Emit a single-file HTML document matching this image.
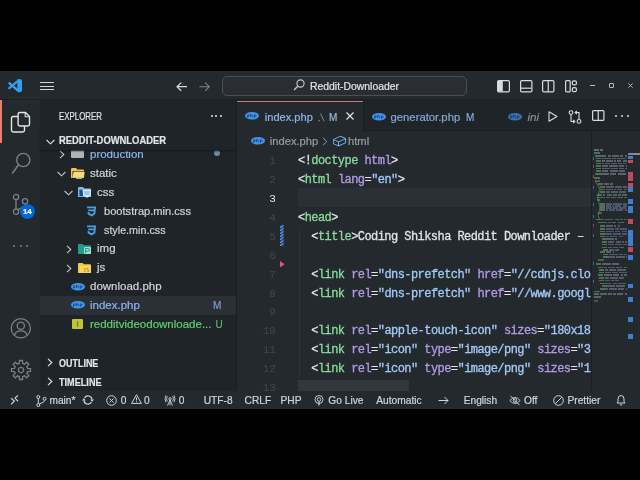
<!DOCTYPE html>
<html><head><meta charset="utf-8">
<style>
*{margin:0;padding:0;box-sizing:border-box}
html,body{-webkit-font-smoothing:antialiased;width:640px;height:480px;background:#000;overflow:hidden;font-family:"Liberation Sans",sans-serif;position:relative}
.a{position:absolute}
.t{position:absolute;white-space:nowrap;line-height:1;-webkit-text-stroke:0.2px currentColor}
svg{position:absolute;overflow:visible}
#title{left:0;top:71px;width:640px;height:28px;background:#24292e}
#tb{left:0;top:99px;width:640px;height:1px;background:#1b1f23}
#act{left:0;top:100px;width:40px;height:291px;background:#24292e}
#side{left:40px;top:100px;width:196px;height:291px;background:#1f2428}
#sideb{left:236px;top:100px;width:1px;height:291px;background:#1b1f23}
#ed{left:237px;top:100px;width:403px;height:291px;background:#24292e}
#tabs{left:237px;top:100px;width:403px;height:30px;background:#1f2428}
#tabsb{left:237px;top:130px;width:403px;height:1px;background:#1b1f23}
#status{left:0;top:391px;width:640px;height:17.5px;background:#24292e}
.code{position:absolute;left:298px;white-space:pre;font-family:"Liberation Mono",monospace;font-size:12px;letter-spacing:-0.56px;color:#e1e4e8;line-height:18.92px;height:18.92px;-webkit-text-stroke:0.3px currentColor}
.ln{position:absolute;left:234.5px;width:41px;text-align:right;font-family:"Liberation Mono",monospace;font-size:11px;letter-spacing:-0.25px;color:#444d56;line-height:18.92px}
.g{color:#8ad99c}.p{color:#b29ae6}.s{color:#a3c9f6}
.ui{font-size:11px;color:#d1d5da}
</style></head><body><div id="root" style="position:absolute;left:0;top:0;width:640px;height:480px;will-change:transform">
<div class="a" id="title"></div>
<div class="a" id="tb"></div>
<div class="a" id="act"></div>
<div class="a" id="side"></div>
<div class="a" id="sideb"></div>
<div class="a" id="ed"></div>
<div class="a" id="tabs"></div>
<div class="a" id="tabsb"></div>
<div class="a" id="status"></div>


<!-- TITLEBAR -->
<svg style="left:4px;top:74px" width="24" height="24" viewBox="4 74 24 24"><path d="M9.3 83.2L18.6 91M9.3 88.2L18.6 80.4" stroke="#33a0ee" stroke-width="2.3" stroke-linecap="round"/><path d="M17.4 79.6L20.6 78.9L22 80.4V90.8L20.6 92.3L17.4 91.5Z" fill="#33a0ee"/></svg>
<div class="a" style="left:40px;top:82.2px;width:14px;height:1.3px;background:#d0d4d8"></div>
<div class="a" style="left:40px;top:85.7px;width:14px;height:1.3px;background:#d0d4d8"></div>
<div class="a" style="left:40px;top:89.2px;width:14px;height:1.3px;background:#d0d4d8"></div>
<svg style="left:176px;top:81.5px" width="12" height="10" viewBox="0 0 12 10"><path d="M11 4.7H1M5.2 0.6L1 4.7L5.2 8.8" stroke="#d8dbde" stroke-width="1.2" fill="none"/></svg>
<svg style="left:199px;top:81.5px" width="12" height="10" viewBox="0 0 12 10"><path d="M0.3 4.7H10.3M6.1 0.6L10.3 4.7L6.1 8.8" stroke="#7b8288" stroke-width="1.1" fill="none"/></svg>
<div class="a" style="left:222px;top:75.5px;width:245px;height:20px;border:1px solid #4a4f55;border-radius:5px;background:#2a2e34"></div>
<svg style="left:293px;top:79px" width="12" height="12" viewBox="0 0 12 12"><circle cx="7.5" cy="4.5" r="3.6" stroke="#c8ccd0" stroke-width="1.1" fill="none"/><path d="M5 7L1 11" stroke="#c8ccd0" stroke-width="1.2"/></svg>
<div class="t" style="left:309.7px;top:81px;font-size:11px;color:#e1e4e8;transform:scaleX(0.945);transform-origin:0 0">Reddit-Downloader</div>
<!-- layout icons -->
<svg style="left:497px;top:79.5px" width="13" height="12.5" viewBox="0 0 13 12.5"><rect x="0.6" y="0.6" width="11.8" height="11.3" rx="1.2" stroke="#d8dbde" stroke-width="1.2" fill="none"/><rect x="1" y="1" width="4.8" height="10.5" fill="#d8dbde"/></svg>
<svg style="left:519.5px;top:79.5px" width="12.5" height="12.5" viewBox="0 0 12.5 12.5"><rect x="0.6" y="0.6" width="11.3" height="11.3" rx="1.2" stroke="#d8dbde" stroke-width="1.2" fill="none"/><path d="M1 8.2H11.5" stroke="#d8dbde" stroke-width="1.2"/></svg>
<svg style="left:542.3px;top:79.5px" width="12.5" height="12.5" viewBox="0 0 12.5 12.5"><rect x="0.6" y="0.6" width="11.3" height="11.3" rx="1.2" stroke="#d8dbde" stroke-width="1.2" fill="none"/><path d="M6.25 1V11.5" stroke="#d8dbde" stroke-width="1.2"/></svg>
<svg style="left:565.3px;top:79.5px" width="12" height="12.5" viewBox="0 0 12 12.5"><rect x="0.6" y="0.6" width="4.6" height="11.3" rx="1" stroke="#d8dbde" stroke-width="1.2" fill="none"/><rect x="7.3" y="0.8" width="4.1" height="4.1" rx="1.5" stroke="#d8dbde" stroke-width="1.2" fill="none"/><rect x="7.3" y="7.6" width="4.1" height="4.1" rx="1.5" stroke="#d8dbde" stroke-width="1.2" fill="none"/></svg>
<div class="a" style="left:590px;top:84.8px;width:5.2px;height:1px;background:#b8bdc2"></div>
<div class="a" style="left:609px;top:83.4px;width:5.2px;height:4.8px;border:1.1px solid #b8bdc2;border-radius:1px"></div>
<svg style="left:628.2px;top:83.4px" width="5" height="5" viewBox="0 0 5 5"><path d="M0.3 0.3L4.7 4.7M4.7 0.3L0.3 4.7" stroke="#b8bdc2" stroke-width="0.9"/></svg>
<!-- ACTIVITY BAR -->
<div class="a" style="left:0;top:100px;width:2px;height:43px;background:#e8806c"></div>
<svg style="left:10px;top:111px" width="21" height="22" viewBox="0 0 21 22">
 <path d="M8 5.5H3.2Q1.5 5.5 1.5 7.2V19.3Q1.5 21 3.2 21H12.8Q14.5 21 14.5 19.3V15" stroke="#e1e4e8" stroke-width="1.4" fill="none"/>
 <path d="M9.8 1.5H15.5L19.5 5.5V13.3Q19.5 15 17.8 15H9.8Q8.1 15 8.1 13.3V3.2Q8.1 1.5 9.8 1.5Z" stroke="#e1e4e8" stroke-width="1.4" fill="none"/>
 <path d="M15.2 1.8V5.8H19.2" stroke="#e1e4e8" stroke-width="1.1" fill="none"/>
</svg>
<svg style="left:11.2px;top:152px" width="20" height="23" viewBox="0 0 20 23"><circle cx="12.3" cy="8" r="6.6" stroke="#7a8087" stroke-width="1.4" fill="none"/><path d="M7.6 12.8L1.2 21.5" stroke="#7a8087" stroke-width="1.5"/></svg>
<svg style="left:11px;top:192px" width="20" height="24" viewBox="0 0 20 24"><circle cx="5" cy="5" r="2.6" stroke="#7a8087" stroke-width="1.3" fill="none"/><circle cx="14" cy="9.3" r="2.6" stroke="#7a8087" stroke-width="1.3" fill="none"/><circle cx="5" cy="19.7" r="2.6" stroke="#7a8087" stroke-width="1.3" fill="none"/><path d="M5 7.6V17.1M14 11.9Q14 15.5 6.5 17.3" stroke="#7a8087" stroke-width="1.3" fill="none"/></svg>
<div class="a" style="left:19.7px;top:204.2px;width:15px;height:15px;border-radius:50%;background:#0366d6"></div>
<div class="t" style="left:19.7px;top:208px;width:15px;text-align:center;font-size:8px;font-weight:bold;color:#fff;letter-spacing:-0.3px">14</div>
<div class="a" style="left:13px;top:244.8px;width:2.2px;height:2.2px;border-radius:50%;background:#7a8087"></div>
<div class="a" style="left:19.5px;top:244.8px;width:2.2px;height:2.2px;border-radius:50%;background:#7a8087"></div>
<div class="a" style="left:26px;top:244.8px;width:2.2px;height:2.2px;border-radius:50%;background:#7a8087"></div>
<svg style="left:10px;top:318px" width="22" height="22" viewBox="0 0 22 22"><circle cx="10.8" cy="10.3" r="9.6" stroke="#7a8087" stroke-width="1.3" fill="none"/><circle cx="10.8" cy="7.8" r="3.6" stroke="#7a8087" stroke-width="1.3" fill="none"/><path d="M4.5 17.3Q5.5 12.8 10.8 12.8Q16.1 12.8 17.1 17.3" stroke="#7a8087" stroke-width="1.3" fill="none"/></svg>
<svg style="left:10px;top:359px" width="22" height="22" viewBox="-11 -11 22 22"><path d="M-1.69 -6.59 L-1.50 -9.48 L1.50 -9.48 L1.69 -6.59 L3.46 -5.85 L5.64 -7.77 L7.77 -5.64 L5.85 -3.46 L6.59 -1.69 L9.48 -1.50 L9.48 1.50 L6.59 1.69 L5.85 3.46 L7.77 5.64 L5.64 7.77 L3.46 5.85 L1.69 6.59 L1.50 9.48 L-1.50 9.48 L-1.69 6.59 L-3.46 5.85 L-5.64 7.77 L-7.77 5.64 L-5.85 3.46 L-6.59 1.69 L-9.48 1.50 L-9.48 -1.50 L-6.59 -1.69 L-5.85 -3.46 L-7.77 -5.64 L-5.64 -7.77 L-3.46 -5.85Z" stroke="#7a8087" stroke-width="1.3" fill="none"/><circle cx="0" cy="0" r="2.6" stroke="#7a8087" stroke-width="1.3" fill="none"/></svg>




<!-- SIDEBAR -->
<div class="t" style="left:59.4px;top:112.00px;font-size:10.2px;color:#e1e4e8;transform:scaleX(0.775);transform-origin:0 0">EXPLORER</div>
<div class="a" style="left:210.7px;top:114.9px;width:2px;height:2px;border-radius:50%;background:#e1e4e8"></div>
<div class="a" style="left:215.1px;top:114.9px;width:2px;height:2px;border-radius:50%;background:#e1e4e8"></div>
<div class="a" style="left:219.5px;top:114.9px;width:2px;height:2px;border-radius:50%;background:#e1e4e8"></div>
<div class="a" style="left:40px;top:296px;width:196px;height:18.9px;background:#2b3036"></div>
<svg style="left:58.5px;top:150px" width="6" height="9" viewBox="0 0 6 9"><path d="M1 0.8L4.8 4.5L1 8.2" stroke="#c0c4c8" stroke-width="1.1" fill="none"/></svg>
<div class="a" style="left:71px;top:150px;width:13px;height:8px;background:#aab5be;border-radius:1px"></div>
<div class="t" style="left:90px;top:149.00px;font-size:11.5px;color:#8fb4ec;">production</div>
<div class="a" style="left:214.25px;top:150.2px;width:6px;height:6px;border-radius:50%;background:#6a8ab2"></div>
<svg style="left:57px;top:170.5px" width="9" height="6" viewBox="0 0 9 6"><path d="M0.6 1L4.5 4.8L8.4 1" stroke="#c0c4c8" stroke-width="1.1" fill="none"/></svg>
<svg style="left:71px;top:168px" width="14" height="11" viewBox="0 0 14 11"><path d="M0 1.2Q0 0 1.2 0H5L6.3 1.4H12Q13 1.4 13 2.4V10H0Z" fill="#e6c35e"/><path d="M1.5 3.2H13.5V9.6H1.5Z" fill="#2b2a1e"/><path d="M2.6 3.8H13.6L13 9.8H1.4Z" fill="#f6da80"/><rect x="5" y="9.6" width="6" height="1.2" fill="#d8d2b0"/></svg>
<div class="t" style="left:90px;top:168.00px;font-size:11.5px;color:#d1d5da;">static</div>
<svg style="left:64px;top:189.5px" width="9" height="6" viewBox="0 0 9 6"><path d="M0.6 1L4.5 4.8L8.4 1" stroke="#c0c4c8" stroke-width="1.1" fill="none"/></svg>
<svg style="left:78px;top:187px" width="14" height="11" viewBox="0 0 14 11"><path d="M0 1.2Q0 0 1.2 0H5L6.3 1.4H12Q13 1.4 13 2.4V10H0Z" fill="#7db8ea"/><rect x="1.4" y="2.6" width="4" height="6.5" fill="#1f4c82"/><path d="M4.6 2.6H13.2L12.7 8.8L8.9 10.8L5.1 8.8Z" fill="#cfe6fb"/><path d="M6 5H11.8M6.3 7H11.5" stroke="#5a9ede" stroke-width="0.9"/></svg>
<div class="t" style="left:97px;top:187.00px;font-size:11.5px;color:#d1d5da;">css</div>
<svg style="left:86px;top:205.5px" width="11" height="11" viewBox="0 0 11 11"><path d="M1 0.5H10L9.3 8.2L5.5 10.5L1.7 8.2L1.5 6H3.3L3.4 7.1L5.5 8.3L7.5 7.2L7.7 5.3H2.3L2.1 3.6H7.9L8 2.2H1.1Z" fill="#46a0ec"/></svg>
<div class="t" style="left:104px;top:206.00px;font-size:11.5px;color:#d1d5da;transform:scaleX(0.965);transform-origin:0 0">bootstrap.min.css</div>
<svg style="left:86px;top:224.5px" width="11" height="11" viewBox="0 0 11 11"><path d="M1 0.5H10L9.3 8.2L5.5 10.5L1.7 8.2L1.5 6H3.3L3.4 7.1L5.5 8.3L7.5 7.2L7.7 5.3H2.3L2.1 3.6H7.9L8 2.2H1.1Z" fill="#46a0ec"/></svg>
<div class="t" style="left:104px;top:225.00px;font-size:11.5px;color:#d1d5da;transform:scaleX(0.935);transform-origin:0 0">style.min.css</div>
<svg style="left:65.5px;top:244.5px" width="6" height="9" viewBox="0 0 6 9"><path d="M1 0.8L4.8 4.5L1 8.2" stroke="#c0c4c8" stroke-width="1.1" fill="none"/></svg>
<svg style="left:78px;top:244px" width="13" height="10" viewBox="0 0 13 10"><path d="M0 1Q0 0 1 0H4.5L5.8 1.3H12Q13 1.3 13 2.3V10H0Z" fill="#1f9e8c"/><rect x="6" y="3" width="7" height="7" rx="1" fill="#9fe0d4"/><path d="M7.5 9V4.5H10Q11.5 4.5 11.5 6Q11.5 7.2 10 7.2H7.5" stroke="#1f9e8c" stroke-width="1" fill="none"/></svg>
<div class="t" style="left:97px;top:243.00px;font-size:11.5px;color:#d1d5da;">img</div>
<svg style="left:65.5px;top:263.5px" width="6" height="9" viewBox="0 0 6 9"><path d="M1 0.8L4.8 4.5L1 8.2" stroke="#c0c4c8" stroke-width="1.1" fill="none"/></svg>
<svg style="left:78px;top:263px" width="13" height="10" viewBox="0 0 13 10"><path d="M0 1Q0 0 1 0H4.5L5.8 1.3H12Q13 1.3 13 2.3V10H0Z" fill="#f5c84a"/><path d="M2 2.8H13V10H2Z" fill="#fbd65e"/><path d="M7 5V8Q7 9 6 9M10.5 5.2Q9 4.8 9 5.8Q9 6.6 10 6.8Q11 7 11 8Q11 9 9 8.7" stroke="#a3781c" stroke-width="0.8" fill="none"/></svg>
<div class="t" style="left:97px;top:262.00px;font-size:11.5px;color:#d1d5da;">js</div>
<svg style="left:70.5px;top:282.6px" width="14" height="7.6" viewBox="0 0 14 7.6" preserveAspectRatio="none"><ellipse cx="7" cy="3.8" rx="7" ry="3.8" fill="#4595e6"/><path d="M2.6 6V2.9Q4.4 2.5 4.4 3.7Q4.4 4.7 2.7 4.5M5.6 1.8V5.1M5.6 3.4Q7.6 2.4 7.6 3.4V5.1M9.4 6V2.9Q11.2 2.5 11.2 3.7Q11.2 4.7 9.5 4.5" stroke="#12488c" stroke-width="0.85" fill="none"/></svg>
<div class="t" style="left:90px;top:281.00px;font-size:11.5px;color:#d1d5da;">download.php</div>
<svg style="left:70.5px;top:301.4px" width="14" height="7.6" viewBox="0 0 14 7.6" preserveAspectRatio="none"><ellipse cx="7" cy="3.8" rx="7" ry="3.8" fill="#4595e6"/><path d="M2.6 6V2.9Q4.4 2.5 4.4 3.7Q4.4 4.7 2.7 4.5M5.6 1.8V5.1M5.6 3.4Q7.6 2.4 7.6 3.4V5.1M9.4 6V2.9Q11.2 2.5 11.2 3.7Q11.2 4.7 9.5 4.5" stroke="#12488c" stroke-width="0.85" fill="none"/></svg>
<div class="t" style="left:90px;top:300.00px;font-size:11.5px;color:#8fb4ec;">index.php</div>
<div class="t" style="left:213px;top:301.00px;font-size:10px;color:#7d9dcc;">M</div>
<svg style="left:72px;top:319px" width="11" height="10" viewBox="0 0 11 10"><rect x="0" y="0" width="11" height="10" rx="1" fill="#c3c33a"/><path d="M5 2L6 3.5L5 5L6 6.5L5 8" stroke="#5a5a20" stroke-width="0.9" fill="none"/></svg>
<div class="t" style="left:90px;top:319.00px;font-size:11.5px;color:#5fcf6e;">redditvideodownloade...</div>
<div class="t" style="left:215.5px;top:320.00px;font-size:10px;color:#52b85f;">U</div>
<div class="a" style="left:40px;top:131px;width:196px;height:18.5px;background:#1f2428;box-shadow:0 1px 1.5px #15181b"></div>
<svg style="left:45.5px;top:138.5px" width="9" height="6" viewBox="0 0 9 6"><path d="M0.6 1L4.5 4.8L8.4 1" stroke="#e1e4e8" stroke-width="1.1" fill="none"/></svg>
<div class="t" style="left:59.4px;top:136.00px;font-size:10px;color:#e1e4e8;font-weight:bold;transform:scaleX(0.94);transform-origin:0 0">REDDIT-DOWNLOADER</div>
<svg style="left:46.5px;top:358.3px" width="6" height="9" viewBox="0 0 6 9"><path d="M1 0.8L4.8 4.5L1 8.2" stroke="#e1e4e8" stroke-width="1.1" fill="none"/></svg>
<div class="t" style="left:59.4px;top:359.00px;font-size:10.2px;color:#e1e4e8;font-weight:bold;transform:scaleX(0.88);transform-origin:0 0">OUTLINE</div>
<svg style="left:46.5px;top:377.1px" width="6" height="9" viewBox="0 0 6 9"><path d="M1 0.8L4.8 4.5L1 8.2" stroke="#e1e4e8" stroke-width="1.1" fill="none"/></svg>
<div class="t" style="left:59.4px;top:378.00px;font-size:10.2px;color:#e1e4e8;font-weight:bold;transform:scaleX(0.895);transform-origin:0 0">TIMELINE</div>

<!-- TABS -->
<div class="a" style="left:237px;top:100px;width:125.5px;height:31px;background:#24292e"></div>
<div class="a" style="left:237px;top:101px;width:125.5px;height:1px;background:#c27a6e"></div>
<div class="a" style="left:362.5px;top:100px;width:1px;height:30px;background:#1b1f23"></div>
<svg style="left:245.3px;top:112.1px" width="14" height="7.6" viewBox="0 0 14 7.6" preserveAspectRatio="none"><ellipse cx="7" cy="3.8" rx="7" ry="3.8" fill="#4595e6"/><path d="M2.6 6V2.9Q4.4 2.5 4.4 3.7Q4.4 4.7 2.7 4.5M5.6 1.8V5.1M5.6 3.4Q7.6 2.4 7.6 3.4V5.1M9.4 6V2.9Q11.2 2.5 11.2 3.7Q11.2 4.7 9.5 4.5" stroke="#12488c" stroke-width="0.85" fill="none"/></svg>
<div class="t" style="left:264.75px;top:112.00px;font-size:11.1px;color:#8fb4ec;">index.php</div>
<svg style="left:318px;top:113px" width="7" height="9" viewBox="0 0 7 9"><path d="M2.6 0.6L6 8.2" stroke="#8a9199" stroke-width="0.9"/><rect x="0.6" y="7" width="1.2" height="1.2" fill="#8a9199"/></svg>
<div class="t" style="left:329px;top:113.00px;font-size:10px;color:#9fb6dc;">M</div>
<svg style="left:346px;top:111.8px" width="8" height="8" viewBox="0 0 8 8"><path d="M0.5 0.5L7.5 7.5M7.5 0.5L0.5 7.5" stroke="#e1e4e8" stroke-width="1.2"/></svg>
<svg style="left:371.5px;top:112.5px" width="14" height="7.6" viewBox="0 0 14 7.6" preserveAspectRatio="none"><ellipse cx="7" cy="3.8" rx="7" ry="3.8" fill="#4595e6"/><path d="M2.6 6V2.9Q4.4 2.5 4.4 3.7Q4.4 4.7 2.7 4.5M5.6 1.8V5.1M5.6 3.4Q7.6 2.4 7.6 3.4V5.1M9.4 6V2.9Q11.2 2.5 11.2 3.7Q11.2 4.7 9.5 4.5" stroke="#12488c" stroke-width="0.85" fill="none"/></svg>
<div class="t" style="left:390.5px;top:112.00px;font-size:11.3px;color:#86a6d6;">generator.php</div>
<div class="t" style="left:466px;top:113.00px;font-size:10px;color:#86a6d6;">M</div>
<svg opacity="0.7" style="left:508px;top:112.5px" width="14" height="7.6" viewBox="0 0 14 7.6" preserveAspectRatio="none"><ellipse cx="7" cy="3.8" rx="7" ry="3.8" fill="#4595e6"/><path d="M2.6 6V2.9Q4.4 2.5 4.4 3.7Q4.4 4.7 2.7 4.5M5.6 1.8V5.1M5.6 3.4Q7.6 2.4 7.6 3.4V5.1M9.4 6V2.9Q11.2 2.5 11.2 3.7Q11.2 4.7 9.5 4.5" stroke="#12488c" stroke-width="0.85" fill="none"/></svg>
<div class="t" style="left:527.5px;top:112.00px;font-size:11.5px;color:#8a9299;font-style:italic">ini</div>
<svg style="left:547.7px;top:110.5px" width="10" height="11" viewBox="0 0 10 11"><path d="M1 0.8L9 5.5L1 10.2Z" stroke="#d8dbde" stroke-width="1.1" fill="none" stroke-linejoin="round"/></svg>
<svg style="left:568px;top:110px" width="14" height="14" viewBox="0 0 14 14"><circle cx="3" cy="2.6" r="1.9" stroke="#d8dbde" stroke-width="1.1" fill="none"/><circle cx="11" cy="11.4" r="1.9" stroke="#d8dbde" stroke-width="1.1" fill="none"/><path d="M3 4.5V11.5H6.5M5.2 10L6.8 11.5L5.2 13M11 9.5V2.5H7.5M8.8 1L7.2 2.5L8.8 4" stroke="#d8dbde" stroke-width="1.1" fill="none"/></svg>
<svg style="left:592px;top:110px" width="12.5" height="11" viewBox="0 0 12.5 11"><rect x="0.6" y="0.6" width="11.3" height="9.8" rx="1" stroke="#d8dbde" stroke-width="1.2" fill="none"/><path d="M6.25 1V10.4" stroke="#d8dbde" stroke-width="1.2"/></svg>
<div class="a" style="left:614.7px;top:114.7px;width:2px;height:2px;border-radius:50%;background:#d8dbde"></div>
<div class="a" style="left:620.6px;top:114.7px;width:2px;height:2px;border-radius:50%;background:#d8dbde"></div>
<div class="a" style="left:626.5px;top:114.7px;width:2px;height:2px;border-radius:50%;background:#d8dbde"></div>
<svg style="left:250.5px;top:137px" width="14" height="7.6" viewBox="0 0 14 7.6" preserveAspectRatio="none"><ellipse cx="7" cy="3.8" rx="7" ry="3.8" fill="#4595e6"/><path d="M2.6 6V2.9Q4.4 2.5 4.4 3.7Q4.4 4.7 2.7 4.5M5.6 1.8V5.1M5.6 3.4Q7.6 2.4 7.6 3.4V5.1M9.4 6V2.9Q11.2 2.5 11.2 3.7Q11.2 4.7 9.5 4.5" stroke="#12488c" stroke-width="0.85" fill="none"/></svg>
<div class="t" style="left:269.75px;top:136.00px;font-size:11.2px;color:#959da5;">index.php</div>
<svg style="left:322px;top:137px" width="6" height="9" viewBox="0 0 6 9"><path d="M1 0.8L4.8 4.5L1 8.2" stroke="#959da5" stroke-width="1" fill="none"/></svg>
<svg style="left:333px;top:136px" width="12.6" height="10" viewBox="1 2 13.45 12" preserveAspectRatio="none"><path d="M14.45 4.5l-5-2.5h-.9l-7 3.5-.55.89v4.5l.55.9 5 2.5h.9l7-3.5.55-.9v-4.5l-.55-.89zm-8 8.64l-4.5-2.25V7.17l4.5 2v3.97zm.5-4.8L2.29 6.23l6.66-3.34 4.67 2.34-6.67 3.11zm7 1.55l-6.5 3.25V9.21l6.5-3v3.68z" fill="#75b6f5"/></svg>
<div class="t" style="left:348px;top:136.00px;font-size:11.2px;color:#959da5;">html</div>

<!-- CODE -->
<div class="a" style="left:298px;top:187.8px;width:294px;height:18.8px;background:#2b3036"></div>
<div class="a" style="left:299px;top:226.2px;width:1px;height:151.4px;background:#2c3238"></div>
<div class="code" style="top:152.10px">&lt;!<span class="g">doctype</span> <span class="p">html</span>&gt;</div>
<div class="code" style="top:171.02px">&lt;<span class="g">html</span> <span class="p">lang</span>=<span class="s">"en"</span>&gt;</div>
<div class="code" style="top:208.86px">&lt;<span class="g">head</span>&gt;</div>
<div class="code" style="top:227.78px">  &lt;<span class="g">title</span>&gt;Coding Shiksha Reddit Downloader –</div>
<div class="code" style="top:265.62px">  &lt;<span class="g">link</span> <span class="p">rel</span>=<span class="s">"dns-prefetch"</span> <span class="p">href</span>=<span class="s">"//cdnjs.clo</span></div>
<div class="code" style="top:284.54px">  &lt;<span class="g">link</span> <span class="p">rel</span>=<span class="s">"dns-prefetch"</span> <span class="p">href</span>=<span class="s">"//www.googl</span></div>
<div class="code" style="top:322.38px">  &lt;<span class="g">link</span> <span class="p">rel</span>=<span class="s">"apple-touch-icon"</span> <span class="p">sizes</span>=<span class="s">"180x18</span></div>
<div class="code" style="top:341.30px">  &lt;<span class="g">link</span> <span class="p">rel</span>=<span class="s">"icon"</span> <span class="p">type</span>=<span class="s">"image/png"</span> <span class="p">sizes</span>=<span class="s">"3</span></div>
<div class="code" style="top:360.22px">  &lt;<span class="g">link</span> <span class="p">rel</span>=<span class="s">"icon"</span> <span class="p">type</span>=<span class="s">"image/png"</span> <span class="p">sizes</span>=<span class="s">"1</span></div>
<div class="ln" style="top:152.10px;color:#41484f">1</div>
<div class="ln" style="top:171.02px;color:#41484f">2</div>
<div class="ln" style="top:189.94px;color:#e1e4e8">3</div>
<div class="ln" style="top:208.86px;color:#41484f">4</div>
<div class="ln" style="top:227.78px;color:#41484f">5</div>
<div class="ln" style="top:246.70px;color:#41484f">6</div>
<div class="ln" style="top:265.62px;color:#41484f">7</div>
<div class="ln" style="top:284.54px;color:#41484f">8</div>
<div class="ln" style="top:303.46px;color:#41484f">9</div>
<div class="ln" style="top:322.38px;color:#41484f">10</div>
<div class="ln" style="top:341.30px;color:#41484f">11</div>
<div class="ln" style="top:360.22px;color:#41484f">12</div>
<div class="ln" style="top:379.14px;color:#41484f">13</div>
<svg style="left:279.8px;top:224.5px" width="3.7" height="21" viewBox="0 0 3.7 21"><defs><pattern id="st" width="3.7" height="3" patternUnits="userSpaceOnUse"><rect width="3.7" height="3" fill="#24406a"/><path d="M0 3L3.7 0" stroke="#6a9ee0" stroke-width="1.1"/></pattern></defs><rect width="3.7" height="21" fill="url(#st)"/></svg>
<svg style="left:279.5px;top:260.5px" width="4.5" height="6.5" viewBox="0 0 4.5 6.5"><path d="M0 0L4.5 3.25L0 6.5Z" fill="#e2557a"/></svg>
<div class="a" style="left:298px;top:379.5px;width:111px;height:11.5px;background:#363b41;opacity:0.85"></div>

<!-- MINIMAP -->
<div class="a" style="left:592px;top:131px;width:48px;height:260px;background:#24292e"></div>
<div class="a" style="left:591px;top:131px;width:1px;height:260px;background:#1b1f23"></div>
<div class="a" style="left:594.0px;top:149.4px;width:5.2px;height:1.8px;background:#a9a6c0;opacity:0.5"></div>
<div class="a" style="left:600.2px;top:149.4px;width:3.2px;height:1.8px;background:#a9a6c0;opacity:0.5"></div>
<div class="a" style="left:594.0px;top:152.4px;width:6.0px;height:1.8px;background:#7fae88;opacity:0.5"></div>
<div class="a" style="left:595.0px;top:154.9px;width:4.5px;height:1.8px;background:#79b584;opacity:0.5"></div>
<div class="a" style="left:600.3px;top:154.9px;width:6.1px;height:1.8px;background:#8b9aa8;opacity:0.5"></div>
<div class="a" style="left:607.9px;top:154.9px;width:2.9px;height:1.8px;background:#8b9aa8;opacity:0.5"></div>
<div class="a" style="left:611.9px;top:154.9px;width:7.2px;height:1.8px;background:#8b9aa8;opacity:0.5"></div>
<div class="a" style="left:620.1px;top:154.9px;width:3.4px;height:1.8px;background:#8b9aa8;opacity:0.5"></div>
<div class="a" style="left:624.8px;top:154.9px;width:2.2px;height:1.8px;background:#8b9aa8;opacity:0.5"></div>
<div class="a" style="left:596.0px;top:157.6px;width:4.5px;height:1.8px;background:#79b584;opacity:0.5"></div>
<div class="a" style="left:602.0px;top:157.6px;width:8.5px;height:1.8px;background:#7d9a8e;opacity:0.5"></div>
<div class="a" style="left:611.7px;top:157.6px;width:3.9px;height:1.8px;background:#7d9a8e;opacity:0.5"></div>
<div class="a" style="left:617.1px;top:157.6px;width:8.9px;height:1.8px;background:#7d9a8e;opacity:0.5"></div>
<div class="a" style="left:596.0px;top:160.1px;width:4.5px;height:1.8px;background:#79b584;opacity:0.5"></div>
<div class="a" style="left:601.8px;top:160.1px;width:2.9px;height:1.8px;background:#8b9aa8;opacity:0.5"></div>
<div class="a" style="left:606.2px;top:160.1px;width:6.5px;height:1.8px;background:#8b9aa8;opacity:0.5"></div>
<div class="a" style="left:613.6px;top:160.1px;width:2.1px;height:1.8px;background:#8b9aa8;opacity:0.5"></div>
<div class="a" style="left:617.3px;top:160.1px;width:4.2px;height:1.8px;background:#8b9aa8;opacity:0.5"></div>
<div class="a" style="left:622.8px;top:160.1px;width:4.2px;height:1.8px;background:#8b9aa8;opacity:0.5"></div>
<div class="a" style="left:596.0px;top:162.6px;width:4.5px;height:1.8px;background:#79b584;opacity:0.5"></div>
<div class="a" style="left:601.5px;top:162.6px;width:2.5px;height:1.8px;background:#7d9a8e;opacity:0.5"></div>
<div class="a" style="left:605.0px;top:162.6px;width:4.6px;height:1.8px;background:#7d9a8e;opacity:0.5"></div>
<div class="a" style="left:610.8px;top:162.6px;width:6.1px;height:1.8px;background:#7d9a8e;opacity:0.5"></div>
<div class="a" style="left:617.9px;top:162.6px;width:4.2px;height:1.8px;background:#7d9a8e;opacity:0.5"></div>
<div class="a" style="left:623.2px;top:162.6px;width:2.9px;height:1.8px;background:#7d9a8e;opacity:0.5"></div>
<div class="a" style="left:596.0px;top:165.1px;width:4.5px;height:1.8px;background:#79b584;opacity:0.5"></div>
<div class="a" style="left:601.5px;top:165.1px;width:6.4px;height:1.8px;background:#8b9aa8;opacity:0.5"></div>
<div class="a" style="left:608.8px;top:165.1px;width:8.8px;height:1.8px;background:#8b9aa8;opacity:0.5"></div>
<div class="a" style="left:618.5px;top:165.1px;width:5.6px;height:1.8px;background:#8b9aa8;opacity:0.5"></div>
<div class="a" style="left:625.5px;top:165.1px;width:1.5px;height:1.8px;background:#8b9aa8;opacity:0.5"></div>
<div class="a" style="left:596.0px;top:167.6px;width:4.5px;height:1.8px;background:#79b584;opacity:0.5"></div>
<div class="a" style="left:601.9px;top:167.6px;width:8.4px;height:1.8px;background:#7d9a8e;opacity:0.5"></div>
<div class="a" style="left:611.4px;top:167.6px;width:6.2px;height:1.8px;background:#7d9a8e;opacity:0.5"></div>
<div class="a" style="left:618.9px;top:167.6px;width:4.7px;height:1.8px;background:#7d9a8e;opacity:0.5"></div>
<div class="a" style="left:624.8px;top:167.6px;width:2.2px;height:1.8px;background:#7d9a8e;opacity:0.5"></div>
<div class="a" style="left:596.0px;top:170.1px;width:4.5px;height:1.8px;background:#79b584;opacity:0.5"></div>
<div class="a" style="left:602.0px;top:170.1px;width:6.2px;height:1.8px;background:#8b9aa8;opacity:0.5"></div>
<div class="a" style="left:609.6px;top:170.1px;width:8.0px;height:1.8px;background:#8b9aa8;opacity:0.5"></div>
<div class="a" style="left:619.0px;top:170.1px;width:5.8px;height:1.8px;background:#8b9aa8;opacity:0.5"></div>
<div class="a" style="left:595.0px;top:173.4px;width:4.5px;height:1.8px;background:#79b584;opacity:0.5"></div>
<div class="a" style="left:600.4px;top:173.4px;width:8.9px;height:1.8px;background:#9a9aa8;opacity:0.5"></div>
<div class="a" style="left:610.2px;top:173.4px;width:6.2px;height:1.8px;background:#9a9aa8;opacity:0.5"></div>
<div class="a" style="left:617.8px;top:173.4px;width:8.3px;height:1.8px;background:#9a9aa8;opacity:0.5"></div>
<div class="a" style="left:594.0px;top:177.1px;width:5.6px;height:1.8px;background:#7fae88;opacity:0.5"></div>
<div class="a" style="left:595.0px;top:180.4px;width:5.0px;height:1.8px;background:#6f9c72;opacity:0.5"></div>
<div class="a" style="left:598.0px;top:183.1px;width:4.5px;height:1.8px;background:#79b584;opacity:0.5"></div>
<div class="a" style="left:604.0px;top:183.1px;width:4.9px;height:1.8px;background:#8b9aa8;opacity:0.5"></div>
<div class="a" style="left:610.2px;top:183.1px;width:2.6px;height:1.8px;background:#8b9aa8;opacity:0.5"></div>
<div class="a" style="left:600.0px;top:186.1px;width:4.5px;height:1.8px;background:#79b584;opacity:0.5"></div>
<div class="a" style="left:605.5px;top:186.1px;width:8.2px;height:1.8px;background:#7f8fa0;opacity:0.5"></div>
<div class="a" style="left:614.8px;top:186.1px;width:7.7px;height:1.8px;background:#7f8fa0;opacity:0.5"></div>
<div class="a" style="left:623.4px;top:186.1px;width:3.6px;height:1.8px;background:#7f8fa0;opacity:0.5"></div>
<div class="a" style="left:600.0px;top:188.6px;width:4.5px;height:1.8px;background:#79b584;opacity:0.5"></div>
<div class="a" style="left:605.7px;top:188.6px;width:7.1px;height:1.8px;background:#7f8fa0;opacity:0.5"></div>
<div class="a" style="left:613.6px;top:188.6px;width:2.0px;height:1.8px;background:#7f8fa0;opacity:0.5"></div>
<div class="a" style="left:616.7px;top:188.6px;width:5.8px;height:1.8px;background:#7f8fa0;opacity:0.5"></div>
<div class="a" style="left:623.5px;top:188.6px;width:3.5px;height:1.8px;background:#7f8fa0;opacity:0.5"></div>
<div class="a" style="left:600.0px;top:191.1px;width:4.5px;height:1.8px;background:#79b584;opacity:0.5"></div>
<div class="a" style="left:606.0px;top:191.1px;width:3.7px;height:1.8px;background:#7f8fa0;opacity:0.5"></div>
<div class="a" style="left:610.7px;top:191.1px;width:7.1px;height:1.8px;background:#7f8fa0;opacity:0.5"></div>
<div class="a" style="left:619.1px;top:191.1px;width:6.9px;height:1.8px;background:#7f8fa0;opacity:0.5"></div>
<div class="a" style="left:597.0px;top:194.1px;width:4.5px;height:1.8px;background:#79b584;opacity:0.5"></div>
<div class="a" style="left:603.0px;top:194.1px;width:2.4px;height:1.8px;background:#7d9a8e;opacity:0.5"></div>
<div class="a" style="left:606.8px;top:194.1px;width:5.1px;height:1.8px;background:#7d9a8e;opacity:0.5"></div>
<div class="a" style="left:613.2px;top:194.1px;width:4.2px;height:1.8px;background:#7d9a8e;opacity:0.5"></div>
<div class="a" style="left:618.3px;top:194.1px;width:2.3px;height:1.8px;background:#7d9a8e;opacity:0.5"></div>
<div class="a" style="left:621.5px;top:194.1px;width:5.5px;height:1.8px;background:#7d9a8e;opacity:0.5"></div>
<div class="a" style="left:597.0px;top:196.6px;width:4.5px;height:1.8px;background:#79b584;opacity:0.5"></div>
<div class="a" style="left:602.3px;top:196.6px;width:2.6px;height:1.8px;background:#7d9a8e;opacity:0.5"></div>
<div class="a" style="left:606.3px;top:196.6px;width:3.4px;height:1.8px;background:#7d9a8e;opacity:0.5"></div>
<div class="a" style="left:611.1px;top:196.6px;width:4.7px;height:1.8px;background:#7d9a8e;opacity:0.5"></div>
<div class="a" style="left:616.9px;top:196.6px;width:6.2px;height:1.8px;background:#7d9a8e;opacity:0.5"></div>
<div class="a" style="left:624.3px;top:196.6px;width:2.7px;height:1.8px;background:#7d9a8e;opacity:0.5"></div>
<div class="a" style="left:597.0px;top:199.1px;width:3.0px;height:1.8px;background:#6f9c72;opacity:0.5"></div>
<div class="a" style="left:600.0px;top:203.1px;width:4.5px;height:1.8px;background:#79b584;opacity:0.5"></div>
<div class="a" style="left:605.7px;top:203.1px;width:6.0px;height:1.8px;background:#6f86a8;opacity:0.5"></div>
<div class="a" style="left:612.9px;top:203.1px;width:8.8px;height:1.8px;background:#6f86a8;opacity:0.5"></div>
<div class="a" style="left:623.2px;top:203.1px;width:3.8px;height:1.8px;background:#6f86a8;opacity:0.5"></div>
<div class="a" style="left:600.0px;top:205.1px;width:4.5px;height:1.8px;background:#79b584;opacity:0.5"></div>
<div class="a" style="left:606.0px;top:205.1px;width:4.6px;height:1.8px;background:#6f86a8;opacity:0.5"></div>
<div class="a" style="left:611.8px;top:205.1px;width:2.0px;height:1.8px;background:#6f86a8;opacity:0.5"></div>
<div class="a" style="left:614.6px;top:205.1px;width:6.7px;height:1.8px;background:#6f86a8;opacity:0.5"></div>
<div class="a" style="left:622.6px;top:205.1px;width:4.4px;height:1.8px;background:#6f86a8;opacity:0.5"></div>
<div class="a" style="left:600.0px;top:207.1px;width:4.5px;height:1.8px;background:#79b584;opacity:0.5"></div>
<div class="a" style="left:605.6px;top:207.1px;width:6.1px;height:1.8px;background:#6f86a8;opacity:0.5"></div>
<div class="a" style="left:612.8px;top:207.1px;width:5.0px;height:1.8px;background:#6f86a8;opacity:0.5"></div>
<div class="a" style="left:619.1px;top:207.1px;width:6.7px;height:1.8px;background:#6f86a8;opacity:0.5"></div>
<div class="a" style="left:600.0px;top:209.1px;width:4.5px;height:1.8px;background:#79b584;opacity:0.5"></div>
<div class="a" style="left:605.7px;top:209.1px;width:2.6px;height:1.8px;background:#6f86a8;opacity:0.5"></div>
<div class="a" style="left:609.2px;top:209.1px;width:5.9px;height:1.8px;background:#6f86a8;opacity:0.5"></div>
<div class="a" style="left:616.2px;top:209.1px;width:6.9px;height:1.8px;background:#6f86a8;opacity:0.5"></div>
<div class="a" style="left:624.6px;top:209.1px;width:2.4px;height:1.8px;background:#6f86a8;opacity:0.5"></div>
<div class="a" style="left:598.0px;top:212.1px;width:3.6px;height:1.8px;background:#6f9c72;opacity:0.5"></div>
<div class="a" style="left:596.0px;top:218.6px;width:4.5px;height:1.8px;background:#79b584;opacity:0.5"></div>
<div class="a" style="left:601.4px;top:218.6px;width:3.1px;height:1.8px;background:#6f9c72;opacity:0.5"></div>
<div class="a" style="left:605.4px;top:218.6px;width:7.8px;height:1.8px;background:#6f9c72;opacity:0.5"></div>
<div class="a" style="left:614.5px;top:218.6px;width:4.1px;height:1.8px;background:#6f9c72;opacity:0.5"></div>
<div class="a" style="left:619.7px;top:218.6px;width:2.9px;height:1.8px;background:#6f9c72;opacity:0.5"></div>
<div class="a" style="left:624.1px;top:218.6px;width:2.9px;height:1.8px;background:#6f9c72;opacity:0.5"></div>
<div class="a" style="left:598.0px;top:221.6px;width:4.5px;height:1.8px;background:#79b584;opacity:0.5"></div>
<div class="a" style="left:603.3px;top:221.6px;width:3.9px;height:1.8px;background:#8b9aa8;opacity:0.5"></div>
<div class="a" style="left:608.3px;top:221.6px;width:2.4px;height:1.8px;background:#8b9aa8;opacity:0.5"></div>
<div class="a" style="left:611.5px;top:221.6px;width:4.8px;height:1.8px;background:#8b9aa8;opacity:0.5"></div>
<div class="a" style="left:617.7px;top:221.6px;width:6.3px;height:1.8px;background:#8b9aa8;opacity:0.5"></div>
<div class="a" style="left:600.0px;top:225.1px;width:4.5px;height:1.8px;background:#79b584;opacity:0.5"></div>
<div class="a" style="left:606.0px;top:225.1px;width:6.7px;height:1.8px;background:#7f8fa0;opacity:0.5"></div>
<div class="a" style="left:614.3px;top:225.1px;width:2.2px;height:1.8px;background:#7f8fa0;opacity:0.5"></div>
<div class="a" style="left:617.8px;top:225.1px;width:2.2px;height:1.8px;background:#7f8fa0;opacity:0.5"></div>
<div class="a" style="left:600.0px;top:228.1px;width:4.5px;height:1.8px;background:#79b584;opacity:0.5"></div>
<div class="a" style="left:606.0px;top:228.1px;width:7.5px;height:1.8px;background:#6f86a8;opacity:0.5"></div>
<div class="a" style="left:615.0px;top:228.1px;width:3.6px;height:1.8px;background:#6f86a8;opacity:0.5"></div>
<div class="a" style="left:619.5px;top:228.1px;width:3.1px;height:1.8px;background:#6f86a8;opacity:0.5"></div>
<div class="a" style="left:623.4px;top:228.1px;width:3.6px;height:1.8px;background:#6f86a8;opacity:0.5"></div>
<div class="a" style="left:600.0px;top:230.6px;width:4.5px;height:1.8px;background:#79b584;opacity:0.5"></div>
<div class="a" style="left:605.5px;top:230.6px;width:8.3px;height:1.8px;background:#6f86a8;opacity:0.5"></div>
<div class="a" style="left:615.0px;top:230.6px;width:5.0px;height:1.8px;background:#6f86a8;opacity:0.5"></div>
<div class="a" style="left:621.5px;top:230.6px;width:5.5px;height:1.8px;background:#6f86a8;opacity:0.5"></div>
<div class="a" style="left:600.0px;top:233.1px;width:4.5px;height:1.8px;background:#79b584;opacity:0.5"></div>
<div class="a" style="left:605.4px;top:233.1px;width:6.7px;height:1.8px;background:#6f86a8;opacity:0.5"></div>
<div class="a" style="left:613.2px;top:233.1px;width:7.6px;height:1.8px;background:#6f86a8;opacity:0.5"></div>
<div class="a" style="left:622.2px;top:233.1px;width:4.8px;height:1.8px;background:#6f86a8;opacity:0.5"></div>
<div class="a" style="left:600.0px;top:235.6px;width:4.5px;height:1.8px;background:#79b584;opacity:0.5"></div>
<div class="a" style="left:606.0px;top:235.6px;width:2.6px;height:1.8px;background:#6f86a8;opacity:0.5"></div>
<div class="a" style="left:609.7px;top:235.6px;width:7.6px;height:1.8px;background:#6f86a8;opacity:0.5"></div>
<div class="a" style="left:618.8px;top:235.6px;width:4.6px;height:1.8px;background:#6f86a8;opacity:0.5"></div>
<div class="a" style="left:602.0px;top:238.1px;width:4.5px;height:1.8px;background:#79b584;opacity:0.5"></div>
<div class="a" style="left:607.4px;top:238.1px;width:6.3px;height:1.8px;background:#8b9aa8;opacity:0.5"></div>
<div class="a" style="left:615.0px;top:238.1px;width:2.0px;height:1.8px;background:#8b9aa8;opacity:0.5"></div>
<div class="a" style="left:602.0px;top:241.1px;width:4.5px;height:1.8px;background:#79b584;opacity:0.5"></div>
<div class="a" style="left:607.7px;top:241.1px;width:6.7px;height:1.8px;background:#7f8fa0;opacity:0.5"></div>
<div class="a" style="left:615.5px;top:241.1px;width:5.1px;height:1.8px;background:#7f8fa0;opacity:0.5"></div>
<div class="a" style="left:621.6px;top:241.1px;width:2.5px;height:1.8px;background:#7f8fa0;opacity:0.5"></div>
<div class="a" style="left:625.0px;top:241.1px;width:2.0px;height:1.8px;background:#7f8fa0;opacity:0.5"></div>
<div class="a" style="left:602.0px;top:243.6px;width:4.5px;height:1.8px;background:#79b584;opacity:0.5"></div>
<div class="a" style="left:607.8px;top:243.6px;width:6.2px;height:1.8px;background:#7f8fa0;opacity:0.5"></div>
<div class="a" style="left:615.4px;top:243.6px;width:6.5px;height:1.8px;background:#7f8fa0;opacity:0.5"></div>
<div class="a" style="left:622.7px;top:243.6px;width:4.3px;height:1.8px;background:#7f8fa0;opacity:0.5"></div>
<div class="a" style="left:602.0px;top:246.6px;width:4.5px;height:1.8px;background:#79b584;opacity:0.5"></div>
<div class="a" style="left:607.5px;top:246.6px;width:4.3px;height:1.8px;background:#7f8fa0;opacity:0.5"></div>
<div class="a" style="left:612.7px;top:246.6px;width:5.0px;height:1.8px;background:#7f8fa0;opacity:0.5"></div>
<div class="a" style="left:619.3px;top:246.6px;width:5.2px;height:1.8px;background:#7f8fa0;opacity:0.5"></div>
<div class="a" style="left:603.0px;top:249.1px;width:4.5px;height:1.8px;background:#79b584;opacity:0.5"></div>
<div class="a" style="left:608.5px;top:249.1px;width:5.7px;height:1.8px;background:#7f8fa0;opacity:0.5"></div>
<div class="a" style="left:615.3px;top:249.1px;width:3.3px;height:1.8px;background:#7f8fa0;opacity:0.5"></div>
<div class="a" style="left:600.0px;top:251.4px;width:4.5px;height:1.8px;background:#79b584;opacity:0.5"></div>
<div class="a" style="left:605.9px;top:251.4px;width:5.5px;height:1.8px;background:#8b9aa8;opacity:0.5"></div>
<div class="a" style="left:612.7px;top:251.4px;width:1.3px;height:1.8px;background:#8b9aa8;opacity:0.5"></div>
<div class="a" style="left:603.0px;top:253.6px;width:4.5px;height:1.8px;background:#79b584;opacity:0.5"></div>
<div class="a" style="left:608.7px;top:253.6px;width:8.9px;height:1.8px;background:#7f8fa0;opacity:0.5"></div>
<div class="a" style="left:618.6px;top:253.6px;width:4.7px;height:1.8px;background:#7f8fa0;opacity:0.5"></div>
<div class="a" style="left:624.2px;top:253.6px;width:2.8px;height:1.8px;background:#7f8fa0;opacity:0.5"></div>
<div class="a" style="left:603.0px;top:256.1px;width:4.5px;height:1.8px;background:#79b584;opacity:0.5"></div>
<div class="a" style="left:608.3px;top:256.1px;width:6.8px;height:1.8px;background:#7f8fa0;opacity:0.5"></div>
<div class="a" style="left:616.3px;top:256.1px;width:8.4px;height:1.8px;background:#7f8fa0;opacity:0.5"></div>
<div class="a" style="left:625.6px;top:256.1px;width:1.4px;height:1.8px;background:#7f8fa0;opacity:0.5"></div>
<div class="a" style="left:598.0px;top:259.1px;width:5.5px;height:1.8px;background:#6f9c72;opacity:0.5"></div>
<div class="a" style="left:596.0px;top:263.1px;width:4.5px;height:1.8px;background:#79b584;opacity:0.5"></div>
<div class="a" style="left:602.1px;top:263.1px;width:8.7px;height:1.8px;background:#8b9aa8;opacity:0.5"></div>
<div class="a" style="left:611.6px;top:263.1px;width:7.4px;height:1.8px;background:#8b9aa8;opacity:0.5"></div>
<div class="a" style="left:598.0px;top:266.6px;width:4.5px;height:1.8px;background:#79b584;opacity:0.5"></div>
<div class="a" style="left:603.7px;top:266.6px;width:3.0px;height:1.8px;background:#7f8fa0;opacity:0.5"></div>
<div class="a" style="left:607.5px;top:266.6px;width:7.6px;height:1.8px;background:#7f8fa0;opacity:0.5"></div>
<div class="a" style="left:616.0px;top:266.6px;width:6.2px;height:1.8px;background:#7f8fa0;opacity:0.5"></div>
<div class="a" style="left:623.6px;top:266.6px;width:3.4px;height:1.8px;background:#7f8fa0;opacity:0.5"></div>
<div class="a" style="left:599.0px;top:269.1px;width:4.5px;height:1.8px;background:#79b584;opacity:0.5"></div>
<div class="a" style="left:604.8px;top:269.1px;width:3.2px;height:1.8px;background:#7f8fa0;opacity:0.5"></div>
<div class="a" style="left:609.1px;top:269.1px;width:7.2px;height:1.8px;background:#7f8fa0;opacity:0.5"></div>
<div class="a" style="left:617.3px;top:269.1px;width:8.8px;height:1.8px;background:#7f8fa0;opacity:0.5"></div>
<div class="a" style="left:599.0px;top:271.6px;width:4.5px;height:1.8px;background:#79b584;opacity:0.5"></div>
<div class="a" style="left:604.8px;top:271.6px;width:5.9px;height:1.8px;background:#7f8fa0;opacity:0.5"></div>
<div class="a" style="left:611.5px;top:271.6px;width:6.7px;height:1.8px;background:#7f8fa0;opacity:0.5"></div>
<div class="a" style="left:619.3px;top:271.6px;width:7.3px;height:1.8px;background:#7f8fa0;opacity:0.5"></div>
<div class="a" style="left:598.0px;top:274.1px;width:4.5px;height:1.8px;background:#79b584;opacity:0.5"></div>
<div class="a" style="left:603.7px;top:274.1px;width:8.7px;height:1.8px;background:#8b9aa8;opacity:0.5"></div>
<div class="a" style="left:613.3px;top:274.1px;width:6.0px;height:1.8px;background:#8b9aa8;opacity:0.5"></div>
<div class="a" style="left:620.7px;top:274.1px;width:2.3px;height:1.8px;background:#8b9aa8;opacity:0.5"></div>
<div class="a" style="left:623.8px;top:274.1px;width:3.2px;height:1.8px;background:#8b9aa8;opacity:0.5"></div>
<div class="a" style="left:599.0px;top:277.1px;width:4.5px;height:1.8px;background:#79b584;opacity:0.5"></div>
<div class="a" style="left:604.5px;top:277.1px;width:4.1px;height:1.8px;background:#7f8fa0;opacity:0.5"></div>
<div class="a" style="left:609.9px;top:277.1px;width:7.7px;height:1.8px;background:#7f8fa0;opacity:0.5"></div>
<div class="a" style="left:619.2px;top:277.1px;width:4.8px;height:1.8px;background:#7f8fa0;opacity:0.5"></div>
<div class="a" style="left:599.0px;top:279.6px;width:4.5px;height:1.8px;background:#79b584;opacity:0.5"></div>
<div class="a" style="left:605.0px;top:279.6px;width:4.7px;height:1.8px;background:#7f8fa0;opacity:0.5"></div>
<div class="a" style="left:610.7px;top:279.6px;width:3.2px;height:1.8px;background:#7f8fa0;opacity:0.5"></div>
<div class="a" style="left:615.2px;top:279.6px;width:3.8px;height:1.8px;background:#7f8fa0;opacity:0.5"></div>
<div class="a" style="left:600.0px;top:282.6px;width:4.5px;height:1.8px;background:#79b584;opacity:0.5"></div>
<div class="a" style="left:605.3px;top:282.6px;width:5.9px;height:1.8px;background:#7f8fa0;opacity:0.5"></div>
<div class="a" style="left:612.8px;top:282.6px;width:4.7px;height:1.8px;background:#7f8fa0;opacity:0.5"></div>
<div class="a" style="left:618.4px;top:282.6px;width:7.8px;height:1.8px;background:#7f8fa0;opacity:0.5"></div>
<div class="a" style="left:602.0px;top:285.1px;width:4.5px;height:1.8px;background:#79b584;opacity:0.5"></div>
<div class="a" style="left:607.3px;top:285.1px;width:7.6px;height:1.8px;background:#7f8fa0;opacity:0.5"></div>
<div class="a" style="left:616.3px;top:285.1px;width:8.9px;height:1.8px;background:#7f8fa0;opacity:0.5"></div>
<div class="a" style="left:600.0px;top:288.1px;width:4.5px;height:1.8px;background:#79b584;opacity:0.5"></div>
<div class="a" style="left:605.3px;top:288.1px;width:2.4px;height:1.8px;background:#7f8fa0;opacity:0.5"></div>
<div class="a" style="left:609.2px;top:288.1px;width:8.0px;height:1.8px;background:#7f8fa0;opacity:0.5"></div>
<div class="a" style="left:618.1px;top:288.1px;width:6.3px;height:1.8px;background:#7f8fa0;opacity:0.5"></div>
<div class="a" style="left:625.7px;top:288.1px;width:1.3px;height:1.8px;background:#7f8fa0;opacity:0.5"></div>
<div class="a" style="left:594.0px;top:290.6px;width:6.0px;height:1.8px;background:#7fae88;opacity:0.5"></div>
<div class="a" style="left:594.0px;top:293.1px;width:4.5px;height:1.8px;background:#79b584;opacity:0.5"></div>
<div class="a" style="left:600.1px;top:293.1px;width:6.7px;height:1.8px;background:#8b9aa8;opacity:0.5"></div>
<div class="a" style="left:608.0px;top:293.1px;width:4.1px;height:1.8px;background:#8b9aa8;opacity:0.5"></div>
<div class="a" style="left:613.1px;top:293.1px;width:2.5px;height:1.8px;background:#8b9aa8;opacity:0.5"></div>
<div class="a" style="left:616.6px;top:293.1px;width:6.9px;height:1.8px;background:#8b9aa8;opacity:0.5"></div>
<div class="a" style="left:624.9px;top:293.1px;width:2.1px;height:1.8px;background:#8b9aa8;opacity:0.5"></div>
<div class="a" style="left:594.0px;top:296.1px;width:7.0px;height:1.8px;background:#7fae88;opacity:0.5"></div>
<div class="a" style="left:594.0px;top:300.1px;width:4.0px;height:1.8px;background:#6f7a84;opacity:0.5"></div>
<svg style="left:594px;top:180px" width="10" height="40" viewBox="0 0 10 40"><path d="M1 1Q5 6 6 10Q3 16 4 20Q7 26 5 32Q3 36 6 39" stroke="#6f9c72" stroke-width="1.1" fill="none" opacity="0.5"/></svg>
<div class="a" style="left:628px;top:153px;width:12px;height:2px;background:#9aa1a8;opacity:0.8"></div>
<div class="a" style="left:628px;top:156.3px;width:4.5px;height:3.2px;background:#3f7fd0"></div>
<div class="a" style="left:628px;top:160px;width:4.5px;height:2.8px;background:#c24a5c"></div>
<div class="a" style="left:628px;top:172px;width:4.5px;height:8.7px;background:#c24a5c"></div>
<div class="a" style="left:628px;top:183.4px;width:4.5px;height:3.2px;background:#c24a5c"></div>
<div class="a" style="left:628px;top:187.2px;width:4.5px;height:5.3px;background:#3f7fd0"></div>
<div class="a" style="left:628px;top:199.4px;width:4.5px;height:4.4px;background:#3f7fd0"></div>
<div class="a" style="left:628px;top:206px;width:4.5px;height:7.0px;background:#3f7fd0"></div>
<div class="a" style="left:628px;top:218.8px;width:4.5px;height:5.0px;background:#c24a5c"></div>
<div class="a" style="left:628px;top:230px;width:4.5px;height:16.3px;background:#3f7fd0"></div>
<div class="a" style="left:628px;top:246.9px;width:4.5px;height:5.1px;background:#c24a5c"></div>
<div class="a" style="left:628px;top:255.4px;width:4.5px;height:4.4px;background:#3f7fd0"></div>
<div class="a" style="left:628px;top:283.5px;width:4.5px;height:4.4px;background:#3f7fd0"></div>
<div class="a" style="left:628px;top:296.6px;width:4.5px;height:5.4px;background:#3f7fd0"></div>
<div class="a" style="left:628px;top:316.9px;width:4.5px;height:5.0px;background:#3f7fd0"></div>
<div class="a" style="left:628px;top:334.4px;width:4.5px;height:5.0px;background:#3f7fd0"></div>
<div class="a" style="left:592.5px;top:157px;width:1.2px;height:2.5px;background:#3f7fd0;opacity:0.7"></div>
<div class="a" style="left:592.5px;top:165px;width:1.2px;height:2.5px;background:#c24a5c;opacity:0.7"></div>
<div class="a" style="left:592.5px;top:175px;width:1.2px;height:2.5px;background:#c24a5c;opacity:0.7"></div>
<div class="a" style="left:592.5px;top:186px;width:1.2px;height:2.5px;background:#3f7fd0;opacity:0.7"></div>
<div class="a" style="left:592.5px;top:203px;width:1.2px;height:2.5px;background:#3f7fd0;opacity:0.7"></div>
<div class="a" style="left:592.5px;top:215px;width:1.2px;height:2.5px;background:#3f7fd0;opacity:0.7"></div>
<div class="a" style="left:592.5px;top:224px;width:1.2px;height:2.5px;background:#c24a5c;opacity:0.7"></div>
<div class="a" style="left:592.5px;top:234px;width:1.2px;height:2.5px;background:#3f7fd0;opacity:0.7"></div>
<div class="a" style="left:592.5px;top:262px;width:1.2px;height:2.5px;background:#3f7fd0;opacity:0.7"></div>
<div class="a" style="left:592.5px;top:280px;width:1.2px;height:2.5px;background:#3f7fd0;opacity:0.7"></div>

<!-- STATUS -->
<svg style="left:10px;top:394px" width="10" height="12" viewBox="0 0 10 12"><path d="M1.1 4.3L4.4 7L1.1 10.4M8 1.4L5 4.1L8 7.25" stroke="#d1d5da" stroke-width="1.1" fill="none"/></svg>
<svg style="left:35.5px;top:394.5px" width="11" height="12" viewBox="0 0 11 12"><circle cx="2.3" cy="2" r="1.5" stroke="#d1d5da" stroke-width="1" fill="none"/><circle cx="8.6" cy="3.8" r="1.5" stroke="#d1d5da" stroke-width="1" fill="none"/><circle cx="2.3" cy="10" r="1.5" stroke="#d1d5da" stroke-width="1" fill="none"/><path d="M2.3 3.5V8.5M8.6 5.3Q8.6 7.5 3.3 8.9" stroke="#d1d5da" stroke-width="1" fill="none"/></svg>
<div class="t" style="left:49.4px;top:396.00px;font-size:10.2px;color:#d1d5da;">main*</div>
<svg style="left:81px;top:394px" width="14" height="12" viewBox="0 0 14 12"><path d="M3.45 3.95A4.1 4.1 0 0 1 11.06 5.43" stroke="#d1d5da" stroke-width="1.2" fill="none"/><path d="M10.55 8.05A4.1 4.1 0 0 1 2.94 6.57" stroke="#d1d5da" stroke-width="1.2" fill="none"/><path d="M9.20 5.40H13.00L11.10 7.70Z" fill="#d1d5da"/><path d="M1.00 6.60H4.80L2.90 4.30Z" fill="#d1d5da"/></svg>
<svg style="left:106px;top:394.5px" width="11" height="11" viewBox="0 0 11 11"><circle cx="5.5" cy="5.5" r="4.8" stroke="#d1d5da" stroke-width="1" fill="none"/><path d="M3.5 3.5L7.5 7.5M7.5 3.5L3.5 7.5" stroke="#d1d5da" stroke-width="1"/></svg>
<div class="t" style="left:120.8px;top:396.00px;font-size:10.2px;color:#d1d5da;">0</div>
<svg style="left:130.5px;top:394.3px" width="11" height="10" viewBox="0 0 11 10"><path d="M5.5 0.7L10.4 9.4H0.6Z" stroke="#d1d5da" stroke-width="1" fill="none" stroke-linejoin="round"/><path d="M5.5 3.5V6.5M5.5 7.4V8.3" stroke="#d1d5da" stroke-width="1"/></svg>
<div class="t" style="left:144px;top:396.00px;font-size:10.2px;color:#d1d5da;">0</div>
<svg style="left:165px;top:394.5px" width="10" height="11" viewBox="0 0 10 11"><circle cx="5" cy="3.8" r="1.2" stroke="#d1d5da" stroke-width="0.9" fill="none"/><path d="M5 5V10.5M2.5 10.5L5 5L7.5 10.5M2.3 1.3Q0.8 3.8 2.3 6.3M7.7 1.3Q9.2 3.8 7.7 6.3M1 0.3Q-1 3.8 1 7.3M9 0.3Q11 3.8 9 7.3" stroke="#d1d5da" stroke-width="0.9" fill="none"/></svg>
<div class="t" style="left:178.8px;top:396.00px;font-size:10.2px;color:#d1d5da;">0</div>
<div class="t" style="left:203.7px;top:396.00px;font-size:10.2px;color:#d1d5da;">UTF-8</div>
<div class="t" style="left:244.6px;top:396.00px;font-size:10.2px;color:#d1d5da;">CRLF</div>
<div class="t" style="left:280.5px;top:396.00px;font-size:10.2px;color:#d1d5da;">PHP</div>
<svg style="left:314px;top:394.5px" width="10" height="11" viewBox="0 0 10 11"><circle cx="5" cy="4.5" r="4" stroke="#d1d5da" stroke-width="0.9" fill="none"/><circle cx="5" cy="4.5" r="1.8" stroke="#d1d5da" stroke-width="0.9" fill="none"/><path d="M5 6.5V10.6" stroke="#d1d5da" stroke-width="1.2"/></svg>
<div class="t" style="left:328.3px;top:396.00px;font-size:10.2px;color:#d1d5da;">Go Live</div>
<div class="t" style="left:376.3px;top:396.00px;font-size:10.2px;color:#d1d5da;">Automatic</div>
<svg style="left:438px;top:396px" width="11" height="9" viewBox="0 0 11 9"><path d="M0.5 4.5H10M6.5 1L10 4.5L6.5 8" stroke="#d1d5da" stroke-width="1" fill="none"/></svg>
<div class="t" style="left:463.7px;top:396.00px;font-size:10.2px;color:#d1d5da;">English</div>
<svg style="left:509px;top:394.5px" width="12" height="11" viewBox="0 0 12 11"><path d="M0.8 5.5Q6 -0.5 11.2 5.5Q6 11.5 0.8 5.5Z" stroke="#d1d5da" stroke-width="0.9" fill="none"/><circle cx="6" cy="5.5" r="1.8" stroke="#d1d5da" stroke-width="0.9" fill="none"/><path d="M1.5 0.8L10.5 10.2" stroke="#d1d5da" stroke-width="1"/></svg>
<div class="t" style="left:524px;top:396.00px;font-size:10.2px;color:#d1d5da;">Off</div>
<svg style="left:552.5px;top:394.5px" width="11" height="11" viewBox="0 0 11 11"><circle cx="5.5" cy="5.5" r="4.8" stroke="#d1d5da" stroke-width="1" fill="none"/><path d="M2.2 8.8L8.8 2.2" stroke="#d1d5da" stroke-width="1"/></svg>
<div class="t" style="left:567.5px;top:396.00px;font-size:10.2px;color:#d1d5da;">Prettier</div>
<svg style="left:616px;top:394px" width="10" height="12" viewBox="0 0 10 12"><path d="M1 9H9L8 7.5V5Q8 1.5 5 1.5Q2 1.5 2 5V7.5Z" stroke="#d1d5da" stroke-width="1" fill="none" stroke-linejoin="round"/><path d="M3.8 10.5Q5 11.8 6.2 10.5" stroke="#d1d5da" stroke-width="1" fill="none"/></svg>
</div></body></html>
